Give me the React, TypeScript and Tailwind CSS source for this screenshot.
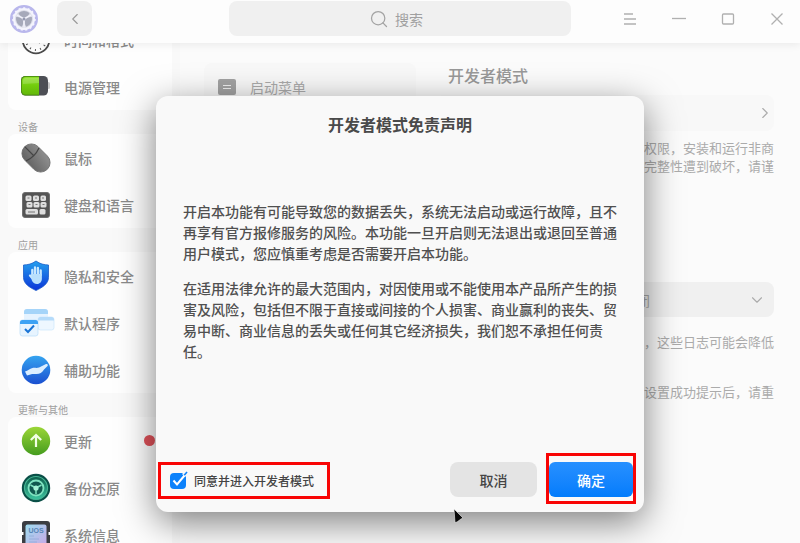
import { useState } from "react"
import type { ReactNode } from "react"
import { ChevronDown, ChevronLeft, ChevronRight, Search } from "lucide-react"

interface SidebarItem {
  label: string
  icon: ReactNode
  badge?: boolean
}

interface SidebarSection {
  title: string
  items: SidebarItem[]
}

const ClockIcon = () => (
  <svg viewBox="0 0 28 28" className="size-7 overflow-visible">
    <circle cx="14" cy="14" r="13.300" fill="#fff" stroke="#4b4b4b" strokeWidth="1.800" />
    <circle cx="14" cy="14" r="10" fill="none" stroke="#555" strokeWidth="2" strokeDasharray="1 4.24" />
    <path d="M14 7v7l4 3" fill="none" stroke="#444" strokeWidth="1.500" />
  </svg>
)

const BatteryIcon = () => (
  <svg viewBox="0 0 28 28" className="size-7 overflow-visible">
    <defs>
      <linearGradient id="battery" x1="0" y1="0" x2="0" y2="1">
        <stop offset="0" stopColor="#8fe02a" />
        <stop offset="0.5" stopColor="#72cc0c" />
        <stop offset="1" stopColor="#63b80a" />
      </linearGradient>
    </defs>
    <rect x="25" y="9" width="3" height="7" rx="1.500" fill="#c9c9c9" />
    <rect x="-1" y="3" width="27" height="19.500" rx="4.500" fill="#4d4f55" />
    <path d="M3.500 3H17v19.500H3.500A4.500 4.500 0 0 1-1 18V7.500A4.500 4.500 0 0 1 3.500 3z" fill="#4f9410" />
    <path d="M4 4h13v17.500H4a4 4 0 0 1-4-4V8a4 4 0 0 1 4-4z" fill="url(#battery)" />
    <path d="M1 11V8a3 3 0 0 1 3-3h13v5z" fill="#fff" opacity="0.180" />
  </svg>
)

const MouseIcon = () => (
  <svg viewBox="0 0 28 28" className="size-7 overflow-visible">
    <defs>
      <linearGradient id="mouse" x1="0" y1="0" x2="1" y2="0.300">
        <stop offset="0" stopColor="#606060" />
        <stop offset="1" stopColor="#8a8a8a" />
      </linearGradient>
    </defs>
    <g transform="rotate(-45 14 14)">
      <rect x="4.500" y="-2" width="19" height="32" rx="9.500" fill="url(#mouse)" stroke="#6a6a6a" strokeWidth="0.800" />
      <path d="M4.800 9q9.200 3.500 18.400 0M14-2v12.500" fill="none" stroke="#454545" strokeWidth="1.200" />
    </g>
  </svg>
)

const KeyboardIcon = () => (
  <svg viewBox="0 0 28 28" className="size-7">
    <rect x="0.500" y="1.500" width="27" height="25" rx="2.500" fill="#545454" stroke="#707070" />
    <g fill="#dedede">
      <rect x="3.500" y="4.500" width="6" height="5.500" rx="1.500" />
      <rect x="11" y="4.500" width="6" height="5.500" rx="1.500" />
      <rect x="18.500" y="4.500" width="5.500" height="5.500" rx="1.500" />
      <rect x="4.500" y="11" width="6" height="5.500" rx="1.500" />
      <rect x="11.500" y="11" width="6" height="5.500" rx="1.500" />
      <rect x="18.500" y="11" width="6" height="5.500" rx="1.500" />
      <rect x="3.500" y="18" width="12.500" height="5.500" rx="1.500" />
      <rect x="17.500" y="18" width="6" height="5.500" rx="1.500" />
    </g>
    <path d="M5.500 7h2M13 7h2M20 7h2M6.500 13.500h2M13.500 13.500h2M20.500 13.500h2M6 21h7" stroke="#777" strokeWidth="1.200" />
  </svg>
)

const ShieldIcon = () => (
  <svg viewBox="0 0 28 28" className="size-7 overflow-visible">
    <defs>
      <linearGradient id="shield" x1="0" y1="0" x2="0" y2="1">
        <stop offset="0" stopColor="#25a0ee" />
        <stop offset="1" stopColor="#0b34d8" />
      </linearGradient>
    </defs>
    <path
      d="M14-1c4 3 8 3.800 12.500 4v12.500c0 6-6 10-12.500 13C7.500 25.500 1.500 21.500 1.500 15.500V3C6 2.800 10 2 14-1z"
      fill="url(#shield)"
      stroke="#1a5cc8"
      strokeWidth="0.800"
    />
    <g fill="none" stroke="#c8e8ff" strokeLinecap="round" strokeWidth="2.300">
      <path d="M10.300 13V8M13 12V5.500M15.900 12V6M18.700 13V8.500M11 17l-3-3.500" />
    </g>
    <path d="M9.200 12h10.700v4.500c0 3-2 5.500-4.900 5.500-2.500 0-4.300-1.500-5.300-4z" fill="#b9e0fd" />
  </svg>
)

const DefaultAppsIcon = () => (
  <svg viewBox="0 0 28 28" className="size-7 overflow-visible">
    <rect x="2" y="0" width="24" height="16" rx="3" fill="#e6f3ff" />
    <path d="M5 0h18a3 3 0 0 1 3 3v2H2V3a3 3 0 0 1 3-3z" fill="#a5d4f9" />
    <rect x="16" y="8" width="16" height="13" rx="2.500" fill="#eef7ff" stroke="#cce6fc" strokeWidth="0.700" />
    <path d="M18.500 8h11A2.500 2.500 0 0 1 32 10.500v1H16v-1A2.500 2.500 0 0 1 18.500 8z" fill="#b5dbfa" />
    <rect x="-2" y="11" width="18" height="16" rx="2.500" fill="#e7f4ff" stroke="#b8ddfb" strokeWidth="0.700" />
    <path d="M.500 11h13a2.500 2.500 0 0 1 2.500 2.500V15H-2v-1.500A2.500 2.500 0 0 1 .500 11z" fill="#3da2f4" />
    <path d="M3 20l3 3 6-6.500" fill="none" stroke="#1974d6" strokeWidth="2" />
  </svg>
)

const AssistIcon = () => (
  <svg viewBox="0 0 28 28" className="size-7 overflow-visible">
    <defs>
      <linearGradient id="assist" x1="0" y1="0" x2="0" y2="1">
        <stop offset="0" stopColor="#35a4f0" />
        <stop offset="1" stopColor="#1a4fd0" />
      </linearGradient>
    </defs>
    <circle cx="14" cy="14" r="14.300" fill="url(#assist)" />
    <path
      d="M3 15.500c3-.500 4.500-3 7.500-3.500 2.500-.500 4 .500 6.500-.500l7-3.500c1.500-.500 2.500.800 1.500 2L22 13.500c-2 3.500-5 5-9 4.500-3-.300-5 .500-8 1.500z"
      fill="#dbeeff"
    />
  </svg>
)

const UpdateIcon = () => (
  <svg viewBox="0 0 28 28" className="size-7 overflow-visible">
    <defs>
      <linearGradient id="update" x1="0" y1="0" x2="0" y2="1">
        <stop offset="0" stopColor="#9bd637" />
        <stop offset="1" stopColor="#459c1e" />
      </linearGradient>
    </defs>
    <circle cx="14" cy="14" r="14.200" fill="url(#update)" />
    <path d="M14 20V8.500M8.800 13L14 8l5.200 5" fill="none" stroke="#f2ffe5" strokeWidth="2.200" />
  </svg>
)

const BackupIcon = () => (
  <svg viewBox="0 0 28 28" className="size-7 overflow-visible">
    <defs>
      <linearGradient id="backup" x1="0" y1="0" x2="0" y2="1">
        <stop offset="0" stopColor="#0c5c4a" />
        <stop offset="1" stopColor="#3cc4a0" />
      </linearGradient>
    </defs>
    <circle cx="14" cy="14" r="14.200" fill="#0a4f47" />
    <circle cx="14" cy="14" r="11.500" fill="url(#backup)" stroke="#45b593" strokeWidth="1.200" />
    <circle cx="14" cy="14" r="7.500" fill="#11594f" stroke="#7fe3c0" strokeWidth="1.800" />
    <path d="M14 14v6M14 14L8.500 11M14 14l5.500-3" stroke="#7fe3c0" strokeWidth="1.500" />
    <circle cx="14" cy="14" r="2.600" fill="#a5f3d5" />
  </svg>
)

const SystemIcon = () => (
  <svg viewBox="0 0 28 28" className="size-7">
    <defs>
      <linearGradient id="system" x1="0" y1="0" x2="1" y2="1">
        <stop offset="0" stopColor="#9edcf0" />
        <stop offset="1" stopColor="#c9a7e6" />
      </linearGradient>
    </defs>
    <rect x="0" y="0" width="28" height="28" rx="3" fill="#3b3d42" />
    <path d="M0 11h1.500v3H0zM26.500 11H28v3h-1.500z" fill="#fff" />
    <rect x="3.500" y="3.500" width="21" height="23" rx="2" fill="url(#system)" />
    <text x="14" y="12" textAnchor="middle" fontSize="7" fontWeight="700" fontFamily="Liberation Sans, sans-serif" fill="#5585b5">
      UOS
    </text>
    <path d="M7 15h5M7 18h10M7 21h8" stroke="#8fa9d8" strokeWidth="0.800" />
  </svg>
)

const Logo = () => (
  <svg viewBox="0 0 30 30" className="size-[30px]">
    <circle cx="15" cy="15" r="12.500" fill="#f4f4fd" stroke="#b9b7ec" strokeWidth="3" />
    <circle cx="15" cy="15" r="10.800" fill="none" stroke="#f4f4fd" strokeWidth="2" strokeDasharray="2 2.524" />
    <circle cx="15" cy="15" r="9" fill="#dcdde8" />
    {[0, 120, 240].map((angle) => (
      <g key={angle} transform={`rotate(${angle} 15 15)`}>
        <path d="M15 13.500c-3-.500-5-2.500-5.500-4.500q5.500-4 11 0c-.500 2-2.500 4-5.500 4.500z" fill="#a6a9ba" />
        <path d="M15 15l-7.500-4.300" stroke="#f4f4fd" strokeWidth="1.200" />
      </g>
    ))}
    <circle cx="15" cy="15" r="1.500" fill="#9599b0" />
  </svg>
)

const sections: SidebarSection[] = [
  {
    title: "",
    items: [
      { label: "时间和格式", icon: <ClockIcon /> },
      { label: "电源管理", icon: <BatteryIcon /> },
    ],
  },
  {
    title: "设备",
    items: [
      { label: "鼠标", icon: <MouseIcon /> },
      { label: "键盘和语言", icon: <KeyboardIcon /> },
    ],
  },
  {
    title: "应用",
    items: [
      { label: "隐私和安全", icon: <ShieldIcon /> },
      { label: "默认程序", icon: <DefaultAppsIcon /> },
      { label: "辅助功能", icon: <AssistIcon /> },
    ],
  },
  {
    title: "更新与其他",
    items: [
      { label: "更新", icon: <UpdateIcon />, badge: true },
      { label: "备份还原", icon: <BackupIcon /> },
      { label: "系统信息", icon: <SystemIcon /> },
    ],
  },
]

function TitleBar() {
  return (
    <header className="relative z-10 grid h-[43px] shrink-0 grid-cols-[2fr_3fr_2fr] bg-[#fdfdfd] pb-[6px] shadow-[0_2px_8px_rgba(0,0,0,0.07)]">
      <div className="flex items-center gap-[18px] pl-[9px]">
        <Logo />
        <button aria-label="返回" className="flex size-[35px] items-center justify-center rounded-lg bg-[#f0f0f0] text-[#999]">
          <ChevronLeft size={18} strokeWidth={1.5} />
        </button>
      </div>
      <label className="mt-px mb-px flex items-center justify-center gap-[6px] rounded-lg bg-[#f0f0f0] text-[#a3a3a3]">
        <Search size={20} strokeWidth={1.5} />
        <input type="text" aria-label="搜索" placeholder="搜索" className="w-9 bg-transparent text-sm outline-none placeholder:text-[#a0a0a0]" />
      </label>
      <div className="flex items-center justify-end gap-[25px] pr-[11px] text-[#b0b0b0]">
        <button aria-label="菜单" className="flex size-6 items-center justify-center">
          <svg viewBox="0 0 14 14" className="size-[14px]" stroke="currentColor" strokeWidth="1.300">
            <path d="M1 2h9M1 7h12M1 12h12" />
          </svg>
        </button>
        <button aria-label="最小化" className="flex size-6 items-center justify-center">
          <svg viewBox="0 0 14 14" className="size-[14px]" stroke="currentColor" strokeWidth="1.300">
            <path d="M0 6.500h14" />
          </svg>
        </button>
        <button aria-label="最大化" className="flex size-6 items-center justify-center">
          <svg viewBox="0 0 14 14" className="size-[14px]" fill="none" stroke="currentColor" strokeWidth="1.300">
            <rect x="1.500" y="2" width="11" height="10" rx="1" />
          </svg>
        </button>
        <button aria-label="关闭" className="flex size-6 items-center justify-center">
          <svg viewBox="0 0 14 14" className="size-[14px]" stroke="currentColor" strokeWidth="1.300">
            <path d="M1.500 1.500l11 11M12.500 1.500l-11 11" />
          </svg>
        </button>
      </div>
    </header>
  )
}

function Sidebar() {
  return (
    <nav className="w-[180px] shrink-0 overflow-hidden bg-[#f9f9f9] px-2">
      <div className="-mt-[27px]">
        {sections.map((section) => (
          <section key={section.title}>
            {section.title && (
              <h2 className="flex h-6 items-end pl-[10px] text-[10px] leading-[14px] text-[#a0a0a0]">{section.title}</h2>
            )}
            <ul className="rounded-lg bg-[#fefefe]">
              {section.items.map((item) => (
                <li key={item.label}>
                  <a href="#" className="flex h-[47px] items-center gap-[14px] pr-[17px] pl-[14px] text-sm font-medium text-[#8a8a8a]">
                    {item.icon}
                    <span className="flex-1">{item.label}</span>
                    {item.badge && <span className="size-[11px] rounded-full bg-[#e0525a]" />}
                  </a>
                </li>
              ))}
            </ul>
          </section>
        ))}
      </div>
    </nav>
  )
}

function Content() {
  return (
    <main className="flex min-w-0 flex-1 bg-[#fbfbfb] text-[#ababab]">
      <div className="w-[236px] shrink-0 pt-5 pl-[24px]">
        <a href="#" className="flex h-[47px] items-center gap-[14px] rounded-lg bg-[#f8f8f8] pl-[14px] text-sm">
          <svg viewBox="0 0 18 16" className="h-4 w-[18px]">
            <rect width="18" height="16" rx="2" fill="#a3a3a3" />
            <path d="M5 6.500h8M5 9.500h8" stroke="#f0f0f0" />
          </svg>
          启动菜单
        </a>
      </div>
      <div className="flex min-w-0 flex-1 flex-col pt-5 pr-[26px] pl-5 text-[13px] leading-[18px]">
        <h1 className="pl-3 text-base leading-6 font-medium text-[#999]">开发者模式</h1>
        <a href="#" aria-label="开发者模式" className="mt-2 flex h-9 items-center justify-end rounded-lg bg-[#f8f8f8]">
          <ChevronRight size={18} strokeWidth={1.5} />
        </a>
        <p className="mt-2 text-right">
          权限，安装和运行非商
          <br />
          完整性遭到破坏，请谨
        </p>
        <div className="relative mt-[107px] flex items-center justify-end">
          <select aria-label="日志" className="h-[35px] w-[180px] appearance-none rounded-lg bg-[#f0f0f0] pl-7 text-sm">
            <option>关闭</option>
          </select>
          <ChevronDown size={18} strokeWidth={1.5} className="pointer-events-none absolute right-2" />
        </div>
        <p className="mt-4 text-right">，这些日志可能会降低</p>
        <p className="mt-8 text-right">设置成功提示后，请重</p>
      </div>
    </main>
  )
}

function DisclaimerDialog() {
  const [agreed, setAgreed] = useState(true)

  return (
    <div
      role="dialog"
      aria-labelledby="disclaimer-title"
      className="flex h-[416px] w-[488px] flex-col rounded-xl bg-[#f9f9f9] shadow-[0_10px_36px_rgba(0,0,0,0.5)]"
    >
      <h2 id="disclaimer-title" className="pt-4 text-center text-base leading-6 font-bold text-[#4a4a4a]">
        开发者模式免责声明
      </h2>
      <div className="mt-[65px] flex-1 space-y-[14px] pr-6 pl-[27px] text-sm leading-[21px] font-medium text-[#505050]">
        <p>开启本功能有可能导致您的数据丢失，系统无法启动或运行故障，且不再享有官方报修服务的风险。本功能一旦开启则无法退出或退回至普通用户模式，您应慎重考虑是否需要开启本功能。</p>
        <p>在适用法律允许的最大范围内，对因使用或不能使用本产品所产生的损害及风险，包括但不限于直接或间接的个人损害、商业赢利的丧失、贸易中断、商业信息的丢失或任何其它经济损失，我们恕不承担任何责任。</p>
      </div>
      <div className="flex items-start pr-[11px] pb-[13px] pl-[2px]">
        <label className="flex h-[37px] w-[172px] items-center gap-2 border-[3px] border-[#f80404] pl-[9px] text-xs font-medium text-[#444]">
          <span className="relative size-4">
            <input
              type="checkbox"
              checked={agreed}
              onChange={(e) => setAgreed(e.target.checked)}
              className="block size-4 appearance-none rounded-[4px] bg-[#d5d5d5] checked:bg-[#0d82fb]"
            />
            {agreed && (
              <svg viewBox="0 0 18 18" className="pointer-events-none absolute -top-[2px] left-0 size-[18px]" fill="none">
                <path d="M13.500 4.500L17 1" stroke="#f9f9f9" strokeWidth="4" />
                <path d="M14 4.500L17 1" stroke="#0d82fb" strokeWidth="1.600" />
                <path d="M3.500 9.500l3.500 4 7.500-9" stroke="#fff" strokeWidth="2" />
              </svg>
            )}
          </span>
          同意并进入开发者模式
        </label>
        <div className="ml-auto flex items-center gap-3">
          <button className="h-[35px] w-[87px] rounded-lg bg-[#e4e4e4] text-sm font-medium text-[#444]">取消</button>
          <div className="relative">
            <button className="block h-[35px] w-[84px] rounded-md bg-linear-to-b from-[#2690ff] to-[#027cfc] text-sm font-medium text-white">
              确定
            </button>
            <span className="pointer-events-none absolute -inset-x-[3px] -top-[9px] -bottom-[7px] border-[3px] border-[#f80404]" />
          </div>
        </div>
      </div>
    </div>
  )
}

export default function App() {
  return (
    <div className="relative flex h-screen flex-col overflow-hidden bg-[#fbfbfb] font-['Noto_Sans_CJK_SC',sans-serif]">
      <TitleBar />
      <div className="flex min-h-0 flex-1">
        <Sidebar />
        <Content />
      </div>
      <div className="absolute inset-0 z-20 flex items-start justify-center pt-24">
        <div className="relative">
          <DisclaimerDialog />
          {/* mouse pointer */}
          <svg viewBox="0 0 12 15" className="absolute -bottom-[11px] left-[297px] h-[15px] w-3">
            <path d="M1 1l9 9-2 1-4 3-2 .500z" fill="#0a0a0a" stroke="#eee" strokeWidth="0.600" />
          </svg>
        </div>
      </div>
    </div>
  )
}
